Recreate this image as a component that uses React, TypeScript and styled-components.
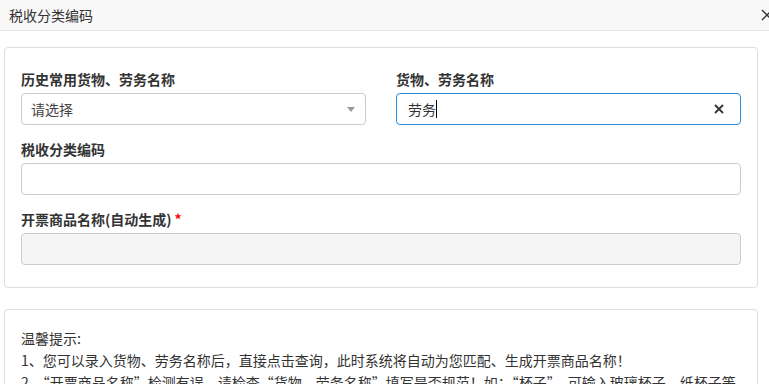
import styled, { createGlobalStyle } from "styled-components";

const GlobalStyle = createGlobalStyle`
  html, body {
    margin: 0;
    padding: 0;
    background: #fff;
    overflow: hidden;
  }
  body {
    font-family: "Microsoft YaHei", "Noto Sans CJK SC", "Noto Sans", sans-serif;
    color: #333;
  }
`;

const App = () => {
  return (
    <>
      <GlobalStyle />
      <Dialog>
        <Header>
          <Title>税收分类编码</Title>
          <CloseButton aria-label="关闭">
            <svg width="12" height="12" viewBox="0 0 12 12">
              <path d="M1 1 L11 11 M11 1 L1 11" stroke="#333" strokeWidth="1.4" fill="none" />
            </svg>
          </CloseButton>
        </Header>

        <Body>
          <Panel>
            <Row>
              <FormGroup>
                <Label>历史常用货物、劳务名称</Label>
                <Select>
                  <Placeholder>请选择</Placeholder>
                  <Arrow />
                </Select>
              </FormGroup>
              <FormGroup>
                <Label>货物、劳务名称</Label>
                <FocusedInput>
                  <Value>劳务</Value>
                  <Caret />
                  <ClearIcon>
                    <svg width="10" height="10" viewBox="0 0 10 10">
                      <path d="M1 1 L9 9 M9 1 L1 9" stroke="#333" strokeWidth="1.8" fill="none" />
                    </svg>
                  </ClearIcon>
                </FocusedInput>
              </FormGroup>
            </Row>

            <FormGroup>
              <Label>税收分类编码</Label>
              <Input type="text" />
            </FormGroup>

            <FormGroup>
              <Label>
                开票商品名称(自动生成)<Required>*</Required>
              </Label>
              <Input type="text" disabled />
            </FormGroup>
          </Panel>

          <TipPanel>
            <TipLine>温馨提示:</TipLine>
            <TipLine>1、您可以录入货物、劳务名称后，直接点击查询，此时系统将自动为您匹配、生成开票商品名称！</TipLine>
            <TipLine>2、“开票商品名称”检测有误，请检查“货物、劳务名称”填写是否规范！如：“杯子”，可输入玻璃杯子、纸杯子等匹配查询！</TipLine>
          </TipPanel>
        </Body>
      </Dialog>
    </>
  );
};

export default App;

// 样式
const Dialog = styled.div`
  width: 769px;
  height: 384px;
  overflow: hidden;
  background: #fff;
`;

const Header = styled.div`
  height: 30px;
  display: flex;
  align-items: center;
  justify-content: space-between;
  padding-left: 9px;
  background: #f8f8f8;
  border-bottom: 1px solid #e5e5e5;
`;

const Title = styled.div`
  font-size: 14px;
  line-height: 20px;
  color: #333;
`;

const CloseButton = styled.div`
  display: flex;
  align-items: center;
  margin-right: -4px;
  cursor: pointer;
`;

const Body = styled.div`
  padding: 16px 0 0 4px;
`;

const Panel = styled.div`
  width: 754px;
  box-sizing: border-box;
  border: 1px solid #ddd;
  border-radius: 4px;
  padding: 21px 16px 22px;
`;

const Row = styled.div`
  display: grid;
  grid-template-columns: 1fr 1fr;
  column-gap: 30px;
`;

const FormGroup = styled.div`
  margin-bottom: 14px;

  &:last-child {
    margin-bottom: 0;
  }
`;

const Label = styled.label`
  display: block;
  font-size: 14px;
  font-weight: bold;
  line-height: 20px;
  margin-bottom: 4px;
  color: #333;
`;

const Required = styled.span`
  color: #f00;
  margin-left: 3px;
`;

const Select = styled.div`
  height: 32px;
  box-sizing: border-box;
  display: flex;
  align-items: center;
  justify-content: space-between;
  padding: 0 8px 0 9px;
  border: 1px solid #ccc;
  border-radius: 4px;
  background: #fff;
`;

const Placeholder = styled.span`
  font-size: 14px;
  color: #444;
`;

const Arrow = styled.span`
  width: 0;
  height: 0;
  border-left: 4px solid transparent;
  border-right: 4px solid transparent;
  border-top: 5px solid #999;
  margin-right: 2px;
`;

const FocusedInput = styled.div`
  height: 32px;
  box-sizing: border-box;
  display: flex;
  align-items: center;
  padding: 0 16px 0 11px;
  border: 1px solid #2a8ee0;
  border-radius: 4px;
  background: #fff;
`;

const Value = styled.span`
  font-size: 14px;
  color: #333;
`;

const Caret = styled.span`
  width: 1px;
  height: 18px;
  background: #000;
`;

const ClearIcon = styled.span`
  display: flex;
  margin-left: auto;
  cursor: pointer;
`;

const Input = styled.input`
  display: block;
  width: 100%;
  height: 32px;
  box-sizing: border-box;
  padding: 0 10px;
  border: 1px solid #ccc;
  border-radius: 4px;
  font-size: 14px;
  font-family: inherit;
  background: #fff;
  outline: none;

  &:disabled {
    background: #f5f5f5;
  }
`;

const TipPanel = styled.div`
  width: 754px;
  box-sizing: border-box;
  margin-top: 21px;
  border: 1px solid #ddd;
  border-radius: 4px;
  padding: 17px 10px 18px 16px;
`;

const TipLine = styled.div`
  font-size: 14px;
  line-height: 22px;
  color: #333;
`;
